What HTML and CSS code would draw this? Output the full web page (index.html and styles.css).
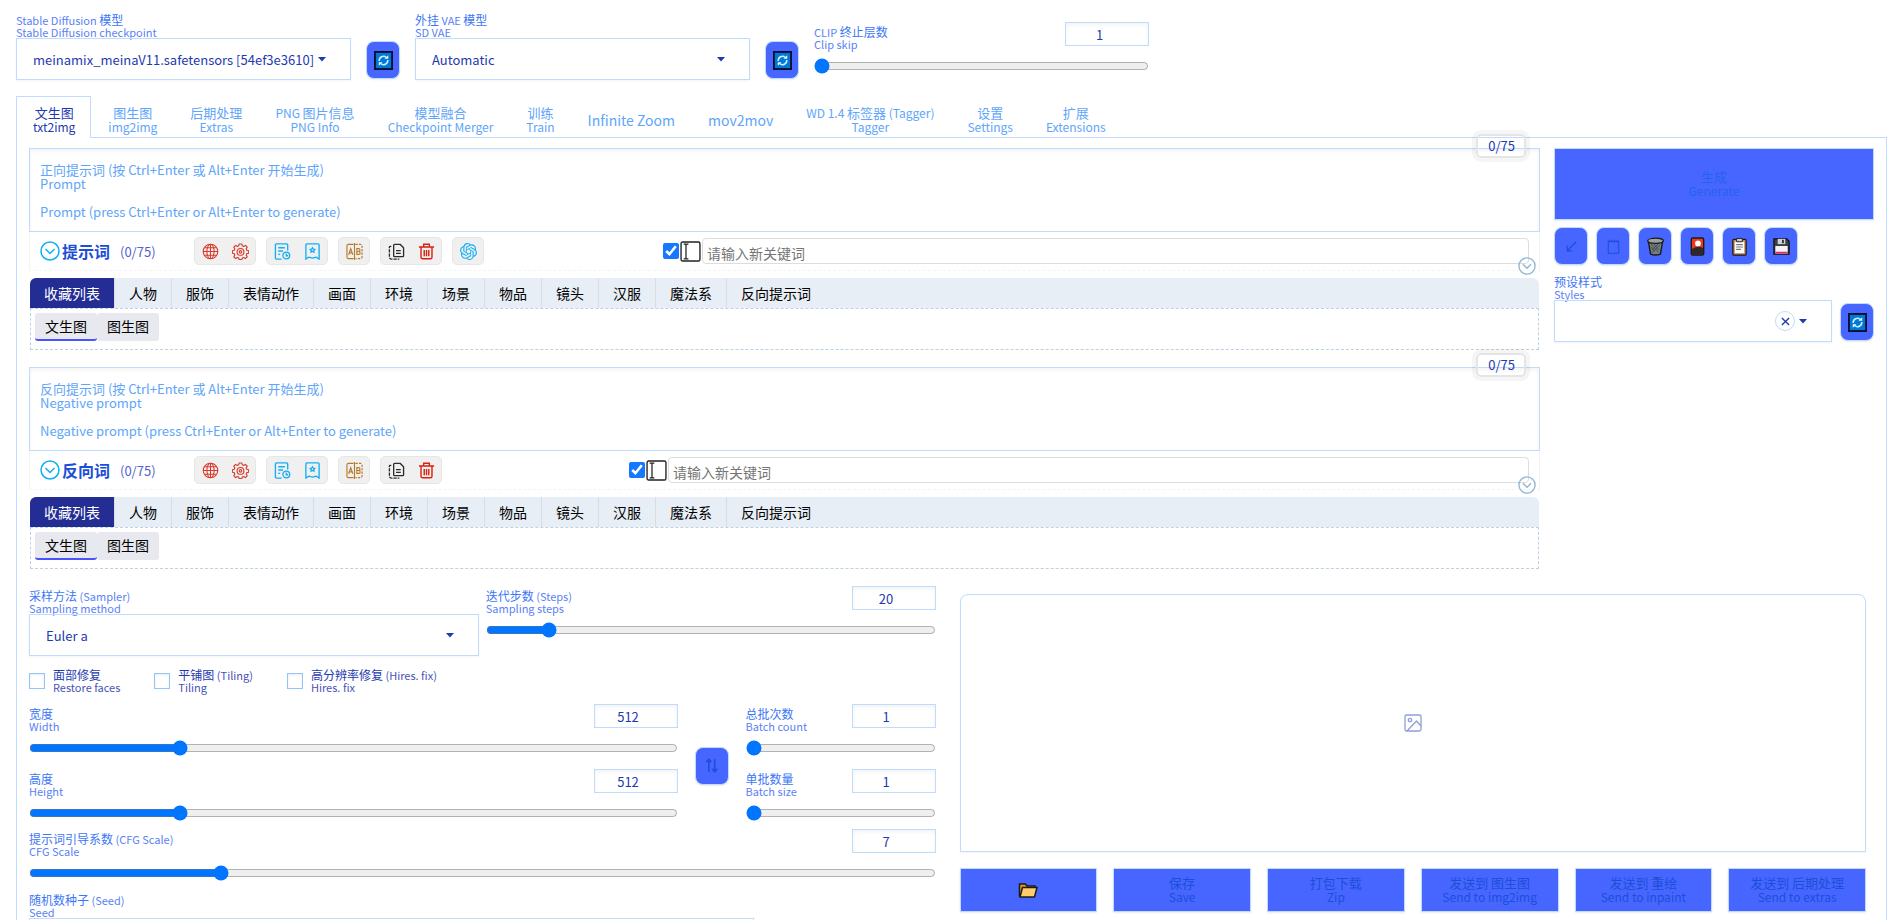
FILE: index.html
```html
<!DOCTYPE html>
<html lang="zh-CN">
<head>
<meta charset="utf-8">
<title>Stable Diffusion</title>
<link rel="stylesheet" href="styles.css">
</head>
<body>
<svg class="sprite" aria-hidden="true">
  <symbol id="i-refresh" viewBox="0 0 20 20"><rect x="1" y="1" width="18" height="18" fill="#0078d7" stroke="#0a1030" stroke-width="2"/><path d="M5.500 10.500a4.500 4.500 0 0 1 7.500-3.700M14.500 9.500a4.500 4.500 0 0 1-7.500 3.700" fill="none" stroke="#cfefff" stroke-width="1.600"/><path d="M11 8.200h4V4.600zM9 11.800H5v3.600z" fill="#e8faff"/></symbol>
  <symbol id="i-caret" viewBox="0 0 8 5"><path d="M0 0h8L4 4.500z" fill="#1e3aaf"/></symbol>
  <symbol id="i-circle" viewBox="0 0 20 20"><g fill="none" stroke="currentColor" stroke-width="1.500"><circle cx="10" cy="10" r="9"/><path d="M5.500 8l4.500 4.500L14.500 8"/></g></symbol>
  <symbol id="i-globe" viewBox="0 0 18 18"><g fill="none" stroke="#d93a2b" stroke-width="1.100"><circle cx="9" cy="9" r="7.700"/><ellipse cx="9" cy="9" rx="3.800" ry="7.700"/><path d="M9 1v16M1 9h16M2.500 5h13M2.500 13h13"/></g></symbol>
  <symbol id="i-gear" viewBox="0 0 18 18"><g fill="none" stroke="#d93a2b" stroke-width="1.200" stroke-linejoin="round"><path d="M7.600 1h2.800l.5 2 1.500.6 1.800-1.100 1.900 1.900-1.100 1.800.6 1.500 2 .5v2.600l-2 .5-.6 1.500 1.100 1.800-1.900 1.900-1.800-1.100-1.500.6-.5 1.500H7.600l-.5-1.500-1.500-.6-1.800 1.100-1.900-1.900L3 12.800l-.6-1.500-2-.5V8.200l2-.5L3 6.200 1.900 4.400l1.900-1.900 1.800 1.100L7.100 3z"/><circle cx="9" cy="9.400" r="3.600"/><circle cx="9" cy="9.400" r="1.300"/></g></symbol>
  <symbol id="i-history" viewBox="0 0 18 18"><g fill="none" stroke="#12aef5" stroke-width="1.400"><path d="M8 17H2.500a1 1 0 0 1-1-1V2a1 1 0 0 1 1-1h11a1 1 0 0 1 1 1v6M4.500 5h7M4.500 8.500h5M4.500 12h2"/><circle cx="13" cy="13.200" r="3.600"/><path d="M13 11v2.500h2"/></g></symbol>
  <symbol id="i-mark" viewBox="0 0 18 18"><path d="M2 17V2a1 1 0 0 1 1-1h12a1 1 0 0 1 1 1v15l-3-2-4 1-4-1z" fill="none" stroke="#12aef5" stroke-width="1.400"/><path d="M9 5l.8 1.400 1.600.4-1.100 1.200.2 1.600L9 8.900l-1.500.7.200-1.600-1.100-1.200 1.600-.4z" fill="none" stroke="#12aef5" stroke-width="1.400"/></symbol>
  <symbol id="i-ab" viewBox="0 0 18 18"><g fill="none" stroke="#b8792a" stroke-width="1.200"><path d="M8 1.500H2.500a1.500 1.500 0 0 0-1.500 1.500v12a1.500 1.500 0 0 0 1.500 1.500H8M9 0v18"/><path d="M10 1.500h5.500A1.500 1.500 0 0 1 17 3v12a1.500 1.500 0 0 1-1.500 1.500H10" stroke-dasharray="2.500 1.200"/><path d="M2.800 12.500L5 6l2.200 6.500M3.600 10.500h2.800M11.500 6v6h2a1.500 1.500 0 0 0 0-3h-2 1.800a1.500 1.500 0 0 0 0-3z"/></g></symbol>
  <symbol id="i-copy" viewBox="0 0 18 18"><g fill="none" stroke="#2b2b2b" stroke-width="1.400"><path d="M7 1.500h6l3.500 3.500V13.500a1 1 0 0 1-1 1H7a1 1 0 0 1-1-1v-11a1 1 0 0 1 1-1zM8.500 8h5M8.500 11h5"/><path d="M3.500 3.500h-1a1 1 0 0 0-1 1V15a2 2 0 0 0 2 2h8.500" stroke-dasharray="3.500 1"/></g></symbol>
  <symbol id="i-trash" viewBox="0 0 18 18"><g fill="none" stroke="#d8210f" stroke-width="1.500"><path d="M1 4.300h16M6 4V1.300h6V4M3.200 4.500V15a1.700 1.700 0 0 0 1.700 1.700h8.200a1.700 1.700 0 0 0 1.700-1.700V4.500M6.600 7.500v6.500M9 7.500v6.500M11.400 7.500v6.500"/></g></symbol>
  <symbol id="i-knot" viewBox="0 0 24 24"><path fill="#12aef5" d="M22.2819 9.8211a5.9847 5.9847 0 0 0-.5157-4.9108 6.0462 6.0462 0 0 0-6.5098-2.9A6.0651 6.0651 0 0 0 4.9807 4.1818a5.9847 5.9847 0 0 0-3.9977 2.9 6.0462 6.0462 0 0 0 .7427 7.0966 5.98 5.98 0 0 0 .511 4.9107 6.051 6.051 0 0 0 6.5146 2.9001A5.9847 5.9847 0 0 0 13.2599 24a6.0557 6.0557 0 0 0 5.7718-4.2058 5.9894 5.9894 0 0 0 3.9977-2.9001 6.0557 6.0557 0 0 0-.7475-7.0729zm-9.022 12.6081a4.4755 4.4755 0 0 1-2.8764-1.0408l.1419-.0804 4.7783-2.7582a.7948.7948 0 0 0 .3927-.6813v-6.7369l2.02 1.1686a.071.071 0 0 1 .038.052v5.5826a4.504 4.504 0 0 1-4.4945 4.4944zm-9.6607-4.1254a4.4708 4.4708 0 0 1-.5346-3.0137l.142.0852 4.783 2.7582a.7712.7712 0 0 0 .7806 0l5.8428-3.3685v2.3324a.0804.0804 0 0 1-.0332.0615L9.74 19.9502a4.4992 4.4992 0 0 1-6.1408-1.6464zM2.3408 7.8956a4.485 4.485 0 0 1 2.3655-1.9728V11.6a.7664.7664 0 0 0 .3879.6765l5.8144 3.3543-2.0201 1.1685a.0757.0757 0 0 1-.071 0l-4.8303-2.7865A4.504 4.504 0 0 1 2.3408 7.872zm16.5963 3.8558L13.1038 8.364 15.1192 7.2a.0757.0757 0 0 1 .071 0l4.8303 2.7913a4.4944 4.4944 0 0 1-.6765 8.1042v-5.6772a.79.79 0 0 0-.407-.667zm2.0107-3.0231l-.142-.0852-4.7735-2.7818a.7759.7759 0 0 0-.7854 0L9.409 9.2297V6.8974a.0662.0662 0 0 1 .0284-.0615l4.8303-2.7866a4.4992 4.4992 0 0 1 6.6802 4.66zM8.3065 12.863l-2.02-1.1638a.0804.0804 0 0 1-.038-.0567V6.0742a4.4992 4.4992 0 0 1 7.3757-3.4537l-.142.0805L8.704 5.459a.7948.7948 0 0 0-.3927.6813zm1.0976-2.3654l2.602-1.4998 2.6069 1.4998v2.9994l-2.5974 1.4997-2.6067-1.4997Z"/></symbol>
  <symbol id="i-beam" viewBox="0 0 20 20"><rect x="1" y="1" width="18" height="18" rx="1.500" fill="#fff" stroke="#222" stroke-width="1.300"/><path d="M3.500 3h4.500M3.500 17h4.500M5.700 3v14" stroke="#222" stroke-width="1.200"/></symbol>
  <symbol id="i-image" viewBox="0 0 18 18"><g fill="none" stroke="#8d9fdb" stroke-width="1.300" stroke-linejoin="round"><rect x="1" y="1" width="16" height="16" rx="1.500"/><circle cx="6" cy="6" r="1.700"/><path d="M3 17l9.500-10L17 12"/></g></symbol>
  <symbol id="i-arrow" viewBox="0 0 20 20"><path d="M15 5L6 14M5.500 9v5.500H11" fill="none" stroke="#1d4ed8" stroke-width="1.300"/></symbol>
  <symbol id="i-note" viewBox="0 0 20 20"><path d="M4.500 4.500h11v12.500h-11zM6 3v3M8.700 3v3M11.300 3v3M14 3v3" fill="none" stroke="#1d4ed8" stroke-width="1.100"/></symbol>
  <symbol id="i-bin" viewBox="0 0 20 20"><path d="M2.500 4.500l2.300 13.500q5.200 2 10.400 0l2.300-13.500z" fill="#777e80" stroke="#1b1b1b" stroke-width="1.500"/><path d="M5 7l8 9M8 7l6 7M6 14l8-8M6 17l9-9M5 10l4 5" stroke="#3c4245" stroke-width=".8"/><ellipse cx="10" cy="4" rx="8.200" ry="2.700" fill="#9ba2a4" stroke="#1b1b1b" stroke-width="1.300"/></symbol>
  <symbol id="i-card" viewBox="0 0 20 20"><rect x="3.500" y="1" width="13" height="18" rx="1.500" fill="#f03a17" stroke="#1b1b1b" stroke-width="1.500"/><path d="M4.300 12.500q5.700-4 11.400-1v6.700H4.300z" fill="#2a2a2a"/><circle cx="10.500" cy="6.800" r="3" fill="#fff"/></symbol>
  <symbol id="i-clip" viewBox="0 0 20 20"><rect x="3" y="2.500" width="14" height="16.500" rx="1" fill="#c78b54" stroke="#1b1b1b" stroke-width="1.300"/><path d="M5 5h10v12H5z" fill="#fff"/><path d="M7 1.500h6V5H7z" fill="#ccc" stroke="#222"/><path d="M6.500 8h7M6.500 10.500h7M6.500 13h5" stroke="#777" stroke-width="1.200"/></symbol>
  <symbol id="i-disk" viewBox="0 0 20 20"><path d="M2 2h13.500L18 4.500V18H2z" fill="#3c3f45" stroke="#111" stroke-width="1.300"/><path d="M6 2h8v5.500H6z" fill="#cfd3d6"/><path d="M10.500 3h2v3.500h-2z" fill="#333"/><path d="M3.500 9.500h13v8h-13z" fill="#f4f4f4"/><path d="M3.500 15.500h13v2h-13z" fill="#d8316f"/></symbol>
  <symbol id="i-folder" viewBox="0 0 20 18"><path d="M1.500 15.500V3h6l1.500 2h8v3" fill="#e8941a" stroke="#1b1b1b" stroke-width="1.500"/><path d="M2 16L4.500 6.500h14.500L16.500 16z" fill="#ffce6b" stroke="#1b1b1b" stroke-width="1.500"/></symbol>
  <symbol id="i-swap" viewBox="0 0 18 18"><path d="M6.500 15V3.500M4 6l2.500-3L9 6M12 3v11.500M9.500 12l2.500 3 2.500-3" fill="none" stroke="#1d4ed8" stroke-width="1.500"/></symbol>
</svg>

<div class="app">
  <header class="quick">
    <div class="field quick-field">
      <label class="label" for="ckpt"><span class="en">Stable Diffusion <b>模型</b></span><span class="en">Stable Diffusion checkpoint</span></label>
      <div class="select-box"><select id="ckpt"><option>meinamix_meinaV11.safetensors [54ef3e3610]</option></select><svg class="caret"><use href="#i-caret"/></svg></div>
    </div>
    <button class="tool" aria-label="刷新模型"><svg><use href="#i-refresh"/></svg></button>
    <div class="field quick-field">
      <label class="label" for="vae"><span class="en"><b>外挂</b> VAE <b>模型</b></span><span class="en">SD VAE</span></label>
      <div class="select-box"><select id="vae"><option>Automatic</option></select><svg class="caret"><use href="#i-caret"/></svg></div>
    </div>
    <button class="tool" aria-label="刷新 VAE"><svg><use href="#i-refresh"/></svg></button>
    <div class="slider quick-field">
      <div class="slider-head"><label class="label" for="clip"><span class="en">CLIP <b>终止层数</b></span><span class="en">Clip skip</span></label><input class="num" type="number" value="1" aria-label="Clip skip"></div>
      <input class="range" id="clip" type="range" min="1" max="12" value="1">
    </div>
  </header>

  <nav class="tabs">
    <button class="tab active"><span>文生图</span><span class="en">txt2img</span></button>
    <button class="tab"><span>图生图</span><span class="en">img2img</span></button>
    <button class="tab"><span>后期处理</span><span class="en">Extras</span></button>
    <button class="tab"><span class="en">PNG <b>图片信息</b></span><span class="en">PNG Info</span></button>
    <button class="tab"><span>模型融合</span><span class="en">Checkpoint Merger</span></button>
    <button class="tab"><span>训练</span><span class="en">Train</span></button>
    <button class="tab single">Infinite Zoom</button>
    <button class="tab single">mov2mov</button>
    <button class="tab"><span class="en">WD 1.4 <b>标签器</b> (Tagger)</span><span class="en">Tagger</span></button>
    <button class="tab"><span>设置</span><span class="en">Settings</span></button>
    <button class="tab"><span>扩展</span><span class="en">Extensions</span></button>
  </nav>

  <main class="panel">
    <section class="upper">
      <div class="prompts">
        <div class="prompt">
          <div class="prompt-text">
            <textarea aria-label="正向提示词" placeholder="正向提示词 (按 Ctrl+Enter 或 Alt+Enter 开始生成)&#10;Prompt&#10;&#10;Prompt (press Ctrl+Enter or Alt+Enter to generate)"></textarea>
            <span class="badge">0/75</span>
          </div>
          <div class="words">
            <svg class="fold"><use href="#i-circle"/></svg><strong class="words-title">提示词</strong><span class="words-count">(0/75)</span>
            <div class="groups">
              <div class="group"><button aria-label="语言"><svg><use href="#i-globe"/></svg></button><button aria-label="设置"><svg><use href="#i-gear"/></svg></button></div>
              <div class="group"><button aria-label="历史"><svg><use href="#i-history"/></svg></button><button aria-label="收藏"><svg><use href="#i-mark"/></svg></button></div>
              <div class="group"><button aria-label="翻译"><svg><use href="#i-ab"/></svg></button></div>
              <div class="group"><button aria-label="复制"><svg><use href="#i-copy"/></svg></button><button aria-label="删除"><svg><use href="#i-trash"/></svg></button></div>
              <div class="group"><button aria-label="ChatGPT"><svg><use href="#i-knot"/></svg></button></div>
            </div>
            <div class="adder"><input type="checkbox" checked aria-label="启用输入"><svg class="beam"><use href="#i-beam"/></svg><input class="word-input" type="text" placeholder="请输入新关键词" aria-label="新关键词"></div>
            <button class="expand" aria-label="展开"><svg><use href="#i-circle"/></svg></button>
          </div>
          <div class="cats"><button class="cat active">收藏列表</button><button class="cat">人物</button><button class="cat">服饰</button><button class="cat">表情动作</button><button class="cat">画面</button><button class="cat">环境</button><button class="cat">场景</button><button class="cat">物品</button><button class="cat">镜头</button><button class="cat">汉服</button><button class="cat">魔法系</button><button class="cat">反向提示词</button></div>
          <div class="subs"><button class="sub active">文生图</button><button class="sub">图生图</button></div>
        </div>
        <div class="prompt">
          <div class="prompt-text">
            <textarea aria-label="反向提示词" placeholder="反向提示词 (按 Ctrl+Enter 或 Alt+Enter 开始生成)&#10;Negative prompt&#10;&#10;Negative prompt (press Ctrl+Enter or Alt+Enter to generate)"></textarea>
            <span class="badge">0/75</span>
          </div>
          <div class="words">
            <svg class="fold"><use href="#i-circle"/></svg><strong class="words-title">反向词</strong><span class="words-count">(0/75)</span>
            <div class="groups groups-short">
              <div class="group"><button aria-label="语言"><svg><use href="#i-globe"/></svg></button><button aria-label="设置"><svg><use href="#i-gear"/></svg></button></div>
              <div class="group"><button aria-label="历史"><svg><use href="#i-history"/></svg></button><button aria-label="收藏"><svg><use href="#i-mark"/></svg></button></div>
              <div class="group"><button aria-label="翻译"><svg><use href="#i-ab"/></svg></button></div>
              <div class="group"><button aria-label="复制"><svg><use href="#i-copy"/></svg></button><button aria-label="删除"><svg><use href="#i-trash"/></svg></button></div>
            </div>
            <div class="adder"><input type="checkbox" checked aria-label="启用输入"><svg class="beam"><use href="#i-beam"/></svg><input class="word-input" type="text" placeholder="请输入新关键词" aria-label="新关键词"></div>
            <button class="expand" aria-label="展开"><svg><use href="#i-circle"/></svg></button>
          </div>
          <div class="cats"><button class="cat active">收藏列表</button><button class="cat">人物</button><button class="cat">服饰</button><button class="cat">表情动作</button><button class="cat">画面</button><button class="cat">环境</button><button class="cat">场景</button><button class="cat">物品</button><button class="cat">镜头</button><button class="cat">汉服</button><button class="cat">魔法系</button><button class="cat">反向提示词</button></div>
          <div class="subs"><button class="sub active">文生图</button><button class="sub">图生图</button></div>
        </div>
      </div>
      <aside class="actions">
        <button class="big generate"><span>生成</span><span class="en">Generate</span></button>
        <div class="tools">
          <button class="tool" aria-label="读取参数"><svg><use href="#i-arrow"/></svg></button>
          <button class="tool" aria-label="便签"><svg><use href="#i-note"/></svg></button>
          <button class="tool" aria-label="清空"><svg><use href="#i-bin"/></svg></button>
          <button class="tool" aria-label="附加网络"><svg><use href="#i-card"/></svg></button>
          <button class="tool" aria-label="应用样式"><svg><use href="#i-clip"/></svg></button>
          <button class="tool" aria-label="保存样式"><svg><use href="#i-disk"/></svg></button>
        </div>
        <div class="styles-row">
          <div class="field styles-field">
            <label class="label" for="styles"><span>预设样式</span><span class="en">Styles</span></label>
            <div class="select-box"><select id="styles"><option></option></select><button class="clear" aria-label="清除"><svg viewBox="0 0 10 10"><path d="M1 1l8 8M9 1l-8 8" stroke="#1e3aaf" stroke-width="1.500"/></svg></button><svg class="caret"><use href="#i-caret"/></svg></div>
          </div>
          <button class="tool" aria-label="刷新样式"><svg><use href="#i-refresh"/></svg></button>
        </div>
      </aside>
    </section>

    <section class="lower">
      <div class="settings">
        <div class="pair">
          <div class="field">
            <label class="label" for="sampler"><span class="en"><b>采样方法</b> (Sampler)</span><span class="en">Sampling method</span></label>
            <div class="select-box"><select id="sampler"><option>Euler a</option></select><svg class="caret"><use href="#i-caret"/></svg></div>
          </div>
          <div class="slider">
            <div class="slider-head"><label class="label" for="steps"><span class="en"><b>迭代步数</b> (Steps)</span><span class="en">Sampling steps</span></label><input class="num" type="number" value="20" aria-label="Steps"></div>
            <input class="range" id="steps" type="range" min="1" max="150" value="20">
          </div>
        </div>
        <div class="checks">
          <label class="check"><input type="checkbox"><span class="label"><span>面部修复</span><span class="en">Restore faces</span></span></label>
          <label class="check"><input type="checkbox"><span class="label"><span class="en"><b>平铺图</b> (Tiling)</span><span class="en">Tiling</span></span></label>
          <label class="check"><input type="checkbox"><span class="label"><span class="en"><b>高分辨率修复</b> (Hires. fix)</span><span class="en">Hires. fix</span></span></label>
        </div>
        <div class="sizes">
          <div class="stack">
            <div class="slider">
              <div class="slider-head"><label class="label" for="w"><span>宽度</span><span class="en">Width</span></label><input class="num" type="number" value="512" aria-label="Width"></div>
              <input class="range" id="w" type="range" min="64" max="2048" value="512">
            </div>
            <div class="slider">
              <div class="slider-head"><label class="label" for="h"><span>高度</span><span class="en">Height</span></label><input class="num" type="number" value="512" aria-label="Height"></div>
              <input class="range" id="h" type="range" min="64" max="2048" value="512">
            </div>
          </div>
          <button class="tool" aria-label="交换宽高"><svg><use href="#i-swap"/></svg></button>
          <div class="stack">
            <div class="slider">
              <div class="slider-head"><label class="label" for="bc"><span>总批次数</span><span class="en">Batch count</span></label><input class="num" type="number" value="1" aria-label="Batch count"></div>
              <input class="range" id="bc" type="range" min="1" max="100" value="1">
            </div>
            <div class="slider">
              <div class="slider-head"><label class="label" for="bs"><span>单批数量</span><span class="en">Batch size</span></label><input class="num" type="number" value="1" aria-label="Batch size"></div>
              <input class="range" id="bs" type="range" min="1" max="8" value="1">
            </div>
          </div>
        </div>
        <div class="slider cfg">
          <div class="slider-head"><label class="label" for="cfg"><span class="en"><b>提示词引导系数</b> (CFG Scale)</span><span class="en">CFG Scale</span></label><input class="num" type="number" value="7" aria-label="CFG Scale"></div>
          <input class="range" id="cfg" type="range" min="1" max="30" step="0.5" value="7">
        </div>
        <div class="field seed">
          <label class="label" for="seed"><span class="en"><b>随机数种子</b> (Seed)</span><span class="en">Seed</span></label>
          <input class="seed-input" id="seed" type="number">
        </div>
      </div>
      <div class="output">
        <div class="gallery"><svg><use href="#i-image"/></svg></div>
        <div class="out-buttons">
          <button class="big" aria-label="打开目录"><svg><use href="#i-folder"/></svg></button>
          <button class="big"><span>保存</span><span class="en">Save</span></button>
          <button class="big"><span>打包下载</span><span class="en">Zip</span></button>
          <button class="big"><span>发送到 图生图</span><span class="en">Send to img2img</span></button>
          <button class="big"><span>发送到 重绘</span><span class="en">Send to inpaint</span></button>
          <button class="big"><span>发送到 后期处理</span><span class="en">Send to extras</span></button>
        </div>
      </div>
    </section>
  </main>
</div>
</body>
</html>
```
FILE: styles.css
```css
* { box-sizing: border-box; }
body, button, input, select, textarea { font-family: "Noto Sans CJK SC", sans-serif; }
body { margin: 0; background: #fff; color: #1e3aaf; }
button, input, select, textarea { margin: 0; padding: 0; color: inherit; }
button { cursor: pointer; border: 0; background: none; }
b { font-weight: 400; }
.sprite { position: absolute; width: 0; height: 0; }
.app { height: 100vh; overflow-y: auto; scrollbar-width: none; padding: 14px 8px 0 16px; }

/* labels */
.label { display: flex; flex-direction: column; font-size: 12px; line-height: 12px; color: #3b76f6; white-space: nowrap; }
.label .en { font-size: 11px; color: #5a82f5; }
.label b { font-size: 12px; color: #3b76f6; }

/* selects */
.field { min-width: 0; }
.select-box { position: relative; }
select { display: block; width: 100%; height: 42px; appearance: none; border: 1px solid #bfdbfe; border-radius: 0; background: transparent; padding: 0 16px; font-size: 13px; box-shadow: 0 1px 2px rgba(0, 0, 0, .05); }
.caret { position: absolute; right: 25px; top: 19px; width: 8px; height: 5px; pointer-events: none; }

/* sliders */
.slider-head { display: flex; justify-content: space-between; align-items: flex-start; }
.slider-head .label { padding-top: 4px; }
.num { width: 84px; height: 24px; border: 1px solid #bfdbfe; background: #fff; padding: 0 8px; font-size: 13px; text-align: center; box-shadow: inset 0 2px 4px rgba(0, 0, 0, .05); }
.range { display: block; width: 100%; height: 16px; margin-top: 8px; accent-color: #0075ff; }

/* square tool buttons */
.tool { display: flex; align-items: center; justify-content: center; flex: none; width: 34px; height: 38px; border: 1px solid #bfdbfe; border-radius: 8px; background: #4766ff; box-shadow: 0 1px 2px rgba(0, 0, 0, .08); }
.tool svg { width: 19px; height: 19px; }

.quick { display: flex; align-items: flex-end; gap: 15px; }
.quick-field { width: 335px; }
.quick > .tool { margin-bottom: 1px; }
.quick .slider { align-self: flex-start; padding-top: 8px; }

/* tabs */
.tabs { display: flex; align-items: flex-end; margin-top: 16px; position: relative; z-index: 1; }
.tab { display: flex; flex-direction: column; align-items: center; justify-content: center; height: 42px; padding: 4px 15px 0 16px; border: 1px solid transparent; border-bottom: 0; margin-bottom: -1px; font-size: 13px; line-height: 14px; color: #60a5fa; white-space: nowrap; }
.tab .en { font-size: 12px; }
.tab b { font-size: 13px; }
.tab.active { border-color: #bfdbfe; background: #fff; color: #1e3aaf; }
.tab.single { font-size: 14px; }

.panel { border: 1px solid #bfdbfe; padding: 10px 12px; }
.upper { display: grid; grid-template-columns: minmax(0, 1fr) 320px; gap: 14px; }
.prompts { display: flex; flex-direction: column; gap: 17px; }

/* prompt */
.prompt-text { position: relative; }
textarea { display: block; width: 100%; height: 84px; resize: none; border: 1px solid #bfdbfe; background: #fff; padding: 14px 10px; font-size: 13px; line-height: 14px; box-shadow: inset 0 2px 4px rgba(0, 0, 0, .05); overflow: hidden; }
textarea::placeholder { color: #60a5fa; }
.badge { position: absolute; right: 14px; top: -14px; padding: 0 9px 0 10px; border: 2px solid #e5e5e5; border-radius: 5px; box-shadow: 0 0 0 4px rgba(0, 0, 0, .04); font-size: 13px; line-height: 20px; }
.words { position: relative; display: flex; align-items: center; height: 39px; padding: 0 10px; border: 1px solid #f3f4f6; border-top: 0; border-bottom-style: dashed; }
.fold { width: 20px; height: 20px; color: #12aef5; flex: none; }
.words-title { width: 50px; margin-left: 2px; font-size: 16px; color: #1d4ed8; }
.words-count { width: 74px; margin-left: 8px; font-size: 13px; color: #5561d0; }
.groups { display: flex; gap: 10px; width: 469px; flex: none; }
.groups-short { width: 435px; }
.group { display: flex; height: 28px; border: 1px solid #e6e6e6; border-radius: 5px; background: #f0f0f0; }
.group button { display: flex; align-items: center; justify-content: center; width: 30px; }
.group svg { width: 17px; height: 17px; }
.adder { display: flex; align-items: center; flex: 1; }
.adder input[type="checkbox"] { width: 16px; height: 16px; accent-color: #1677ff; }
.beam { width: 21px; height: 21px; margin: 0 1px; flex: none; }
.word-input { flex: 1; min-width: 0; height: 26px; border: 1px solid #ddd; border-radius: 4px; padding: 4px 4px 0; font-size: 14px; background: #fff; }
.word-input::placeholder { color: #757575; }
.expand { position: absolute; right: 3px; bottom: -5px; width: 18px; height: 18px; color: #92b6d3; z-index: 1; }
.expand svg { display: block; width: 18px; height: 18px; }
.cats { display: flex; height: 30px; margin: 7px 1px 0; border-radius: 6px 6px 0 0; overflow: hidden; background: #e7eef5; }
.cat { padding: 0 14px; border-right: 1px solid #d9dde1; font-size: 14px; color: #000; }
.cat:last-child { border-right: 0; }
.cat.active { background: #232d94; color: #fff; }
.subs { display: flex; height: 42px; margin: 0 1px; padding: 4px; border: 1px dashed #bcd2e3; }
.sub { height: 28px; padding: 0 10px; border-bottom: 2px solid transparent; border-radius: 3px; background: #e7e9ef; font-size: 14px; color: #000; }
.sub.active { border-bottom-color: #4754ff; }

/* primary buttons */
.big { display: flex; flex-direction: column; align-items: center; justify-content: center; border: 1px solid #bfdbfe; background: #4766ff; color: #1d4ed8; font-size: 13px; line-height: 14px; white-space: nowrap; box-shadow: 0 1px 2px rgba(0, 0, 0, .08); }
.big .en { font-size: 12px; }
.generate { width: 100%; height: 72px; color: #2563eb; }
.tools { display: flex; gap: 8px; margin-top: 7px; }
.styles-row { display: flex; align-items: flex-end; gap: 8px; margin-top: 11px; }
.styles-row > .tool { margin-bottom: 1px; }
.styles-field { flex: 1; }
.clear { position: absolute; right: 37px; top: 11px; display: flex; align-items: center; justify-content: center; width: 20px; height: 20px; border: 1px solid #bfdbfe; border-radius: 50%; background: #fff; }
.clear svg { width: 9px; height: 9px; }

/* generation settings */
.lower { display: grid; grid-template-columns: repeat(2, minmax(0, 1fr)); gap: 24px; margin-top: 17px; padding-right: 8px; }
.pair { display: grid; grid-template-columns: repeat(2, minmax(0, 1fr)); gap: 7px; }
.pair .field { padding-top: 4px; }
.checks { display: flex; gap: 34px; margin-top: 13px; }
.check { display: flex; align-items: center; gap: 8px; }
.check .label, .check .label b { color: #1e3aaf; }
.check .label .en { color: #4a52b8; }
.check input { width: 16px; height: 16px; appearance: none; border: 1px solid #93c5fd; background: #fff; box-shadow: inset 0 1px 3px rgba(0, 0, 0, .08); }
.sizes { display: grid; grid-template-columns: minmax(0, 1fr) 34px 190px; gap: 17px; align-items: center; margin-top: 11px; }
.sizes .tool { margin-top: 6px; }
.stack { display: flex; flex-direction: column; gap: 13px; }
.cfg { margin-top: 8px; }
.seed { margin-top: 13px; }
.seed-input { display: block; width: 80%; height: 40px; border: 1px solid #bfdbfe; background: transparent; padding: 0 10px; }

.output { padding-top: 8px; }
.gallery { display: flex; align-items: center; justify-content: center; height: 258px; border: 1px solid #bfdbfe; border-radius: 8px 8px 0 0; box-shadow: 0 1px 2px rgba(0, 0, 0, .05); }
.gallery svg { width: 18px; height: 18px; }
.out-buttons { display: grid; grid-template-columns: repeat(6, minmax(0, 1fr)); gap: 16px; margin-top: 16px; }
.out-buttons .big { height: 44px; }
.out-buttons svg { width: 20px; height: 18px; }
```
